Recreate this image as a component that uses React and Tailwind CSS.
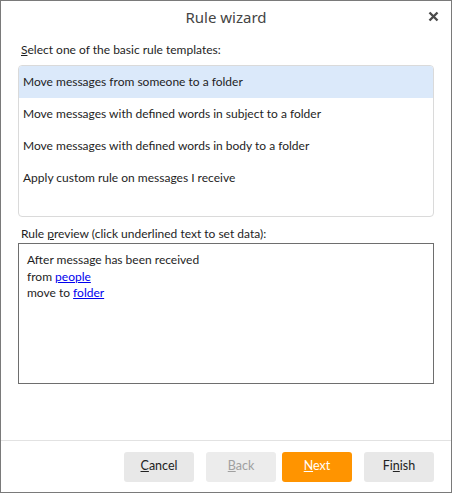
import React, { useState } from "react";

const templates = [
  "Move messages from someone to a folder",
  "Move messages with defined words in subject to a folder",
  "Move messages with defined words in body to a folder",
  "Apply custom rule on messages I receive",
];

const font = { fontFamily: '"Lato", "Noto Sans", sans-serif' };

const Btn = ({ children, kind = "default" }) => {
  const styles = {
    default: "bg-[#e8e8e8] text-[#222]",
    disabled: "bg-[#ececec] text-[#a0a0a0]",
    primary: "bg-[#ff9400] text-white",
  };
  return (
    <button className={`w-[70px] h-[30px] rounded-[3px] text-[12.5px] ${styles[kind]}`}>
      {children}
    </button>
  );
};

export default function App() {
  const [selected, setSelected] = useState(0);

  return (
    <div
      className="w-[452px] h-[493px] border border-[#7a7a7a] bg-white flex flex-col text-[#1e1e1e]"
      style={font}
    >
      {/* title bar */}
      <div className="relative h-[33px] flex items-center justify-center">
        <span className="text-[15px] text-[#444] font-['Noto_Sans',sans-serif]">
          Rule wizard
        </span>
        <svg
          className="absolute right-[12px] top-[10px]"
          width="11"
          height="11"
          viewBox="0 0 11 11"
        >
          <path d="M1.5 1.5 L9.5 9.5 M9.5 1.5 L1.5 9.5" stroke="#4a4a4a" strokeWidth="2.4" />
        </svg>
      </div>

      <div className="flex-1 px-[17px] pt-[7px] text-[12px]">
        <div className="h-[18px] leading-[18px] pl-[3px]">
          <span className="underline">S</span>elect one of the basic rule templates:
        </div>
        <div className="mt-[6px] h-[152px] border border-[#dadada] rounded-[4px] overflow-hidden">
          {templates.map((t, i) => (
            <div
              key={t}
              onClick={() => setSelected(i)}
              className={`h-[32px] leading-[31px] pl-[4px] ${
                selected === i ? "bg-[#dbe9fa]" : ""
              }`}
            >
              {t}
            </div>
          ))}
        </div>

        <div className="mt-[8px] h-[18px] leading-[18px] pl-[3px]">
          Rule <span className="underline">p</span>review (click underlined text to set data):
        </div>
        <div className="h-[141px] border border-[#6e6e6e] px-[8px] pt-[8px] leading-[16.5px]">
          <div>After message has been received</div>
          <div>
            from <span className="text-[#0000ee] underline cursor-pointer">people</span>
          </div>
          <div>
            move to <span className="text-[#0000ee] underline cursor-pointer">folder</span>
          </div>
        </div>
      </div>

      {/* footer */}
      <div className="h-[52px] border-t border-[#e2e2e2] flex items-center justify-end gap-[12px] pr-[17px]">
        <Btn>
          <span className="underline">C</span>ancel
        </Btn>
        <div className="flex gap-[6px]">
          <Btn kind="disabled">
            <span className="underline">B</span>ack
          </Btn>
          <Btn kind="primary">
            <span className="underline">N</span>ext
          </Btn>
        </div>
        <Btn>
          Fi<span className="underline">n</span>ish
        </Btn>
      </div>
    </div>
  );
}
